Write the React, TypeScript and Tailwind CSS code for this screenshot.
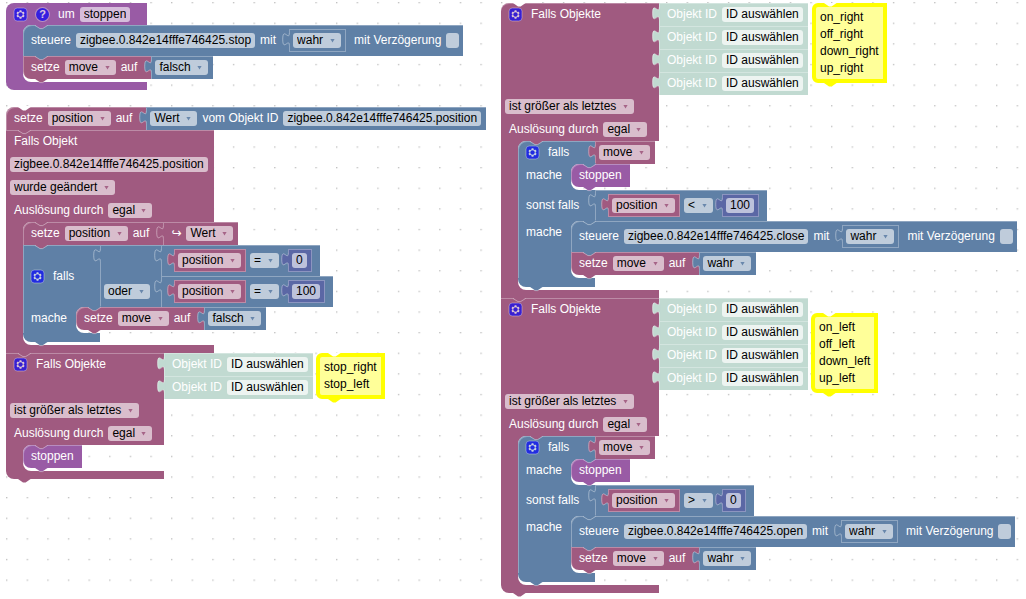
import type { ReactNode } from "react";
import clsx from "clsx";

const palette = {
  variable: { bg: "bg-[#a05a80]", fill: "fill-[#a05a80]" },
  logic: { bg: "bg-[#5f80a6]", fill: "fill-[#5f80a6]" },
  procedure: { bg: "bg-[#995ba5]", fill: "fill-[#995ba5]" },
  math: { bg: "bg-[#5b67a5]", fill: "fill-[#5b67a5]" },
  shadow: { bg: "bg-[#c1dad1]", fill: "fill-[#c1dad1]" },
  canvas: { bg: "bg-white", fill: "fill-white" },
};

type Color = keyof typeof palette;

const field = "h-[15px] rounded-[3px] bg-white/60 px-1 text-black leading-[15px] whitespace-nowrap outline-none";

function Notch({ color, at, line = true }: { color: Color; at: "top" | "bottom"; line?: boolean }) {
  return (
    <svg
      className={clsx("absolute left-3 z-10 overflow-visible pointer-events-none", at === "top" ? "top-0" : "top-full")}
      width="13"
      height="4"
      viewBox="0 0 13 4"
    >
      <path className={palette[color].fill} d="M0 -1V0L5 3.4H7.6L12.6 0V-1z" />
      {line && <path d="M0 0.5L5 3.6H7.6L12.6 0.5" fill="none" stroke="#fff" strokeOpacity="0.4" />}
    </svg>
  );
}

function Plug({ color }: { color: Color }) {
  return (
    <svg className="absolute right-full top-0 z-10 overflow-visible pointer-events-none" width="7" height="18" viewBox="0 0 7 18">
      <g transform="translate(0.4 0) scale(0.825)">
        <path className={palette[color].fill} d="M9.5 5H8c0 10 -8 -8 -8 7.5s8 -2.5 8 7.5h1.5z" />
        <path d="M8.4 5c0 10 -8 -8 -8 7.5s8 -2.5 8 7.5" fill="none" stroke="#fff" strokeOpacity="0.4" strokeWidth="1.2" />
      </g>
    </svg>
  );
}

function Gear() {
  return (
    <button type="button" aria-label="Einstellungen" className="mr-1 size-[13px] shrink-0 opacity-65">
      <svg viewBox="0 0 16 16" className="size-full overflow-visible">
        <rect width="16" height="16" rx="4" fill="#00f" stroke="#fff" strokeOpacity="0.6" />
        <path
          fill="#fff"
          d="m4.203,7.296 0,1.368 -0.92,0.677 -0.11,0.41 0.9,1.559 0.41,0.11 1.043,-0.457 1.187,0.683 0.127,1.134 0.3,0.3 1.8,0 0.3,-0.299 0.127,-1.138 1.185,-0.682 1.046,0.458 0.409,-0.11 0.9,-1.559 -0.11,-0.41 -0.92,-0.677 0,-1.366 0.92,-0.677 0.11,-0.41 -0.9,-1.559 -0.409,-0.109 -1.046,0.458 -1.185,-0.682 -0.127,-1.138 -0.3,-0.299 -1.8,0 -0.3,0.3 -0.126,1.135 -1.187,0.682 -1.043,-0.457 -0.41,0.11 -0.899,1.559 0.108,0.409z"
        />
        <circle cx="8" cy="8" r="2.7" fill="#00f" />
      </svg>
    </button>
  );
}

function Help() {
  return (
    <button
      type="button"
      aria-label="Hilfe"
      className="mr-1 flex size-[13px] shrink-0 items-center justify-center rounded-full bg-[#00f] text-[11px] font-bold leading-none text-white opacity-65 ring-1 ring-white/50"
    >
      ?
    </button>
  );
}

function Dropdown({ value, label, color = "variable" }: { value: string; label: string; color?: Color }) {
  return (
    <span className="relative flex">
      <select aria-label={label} className={clsx(field, "appearance-none pr-[17px]")}>
        <option>{value}</option>
      </select>
      <svg className="absolute right-[6px] top-[5px] pointer-events-none" width="5" height="5" viewBox="0 0 5 5">
        <path className={palette[color].fill} fillOpacity="0.9" d="M0.4 1H4.6L2.5 4.4z" />
      </svg>
    </span>
  );
}

function TextInput({ value, label }: { value: string; label: string }) {
  return <input type="text" aria-label={label} defaultValue={value} className={clsx(field, "field-sizing-content")} />;
}

function IdField({ children, light }: { children: string; light?: boolean }) {
  return <button type="button" className={clsx(field, light && "bg-white/70")}>{children}</button>;
}

// value blocks plug into their parent from the right
function Value({ color, children, inline }: { color: Color; children: ReactNode; inline?: boolean }) {
  return (
    <div
      className={clsx(
        "relative flex h-[23px] items-center gap-[5px] pl-1 pr-[5px]",
        palette[color].bg,
        inline ? "shadow-[inset_0_0_0_1px_rgba(255,255,255,0.3)]" : "shadow-[inset_1px_1px_0_rgba(255,255,255,0.3)]",
      )}
    >
      <Plug color={color} />
      {children}
    </div>
  );
}

function Bool({ value, inline }: { value: string; inline?: boolean }) {
  return (
    <Value color="logic" inline={inline}>
      <Dropdown value={value} label="Wahrheitswert" color="logic" />
    </Value>
  );
}

function Variable({ name, inline }: { name: string; inline?: boolean }) {
  return (
    <Value color="variable" inline={inline}>
      <Dropdown value={name} label="Variable" />
    </Value>
  );
}

function Compare({ op, value }: { op: string; value: string }) {
  return (
    <div className="relative flex h-[31px] items-center bg-[#5f80a6] pl-[13px] pr-2 shadow-[inset_1px_1px_0_rgba(255,255,255,0.3)]">
      <Plug color="logic" />
      <Variable name="position" inline />
      <div className="flex pl-1 pr-[9px]">
        <Dropdown value={op} label="Vergleich" color="logic" />
      </div>
      <Value color="math" inline>
        <TextInput value={value} label="Zahl" />
      </Value>
    </div>
  );
}

// one coloured block of a stack, with an optional value plugged in at its right
function Statement({ color, first, last, className, value, children }: {
  color: Color;
  first?: boolean;
  last?: boolean;
  className?: string;
  value?: ReactNode;
  children: ReactNode;
}) {
  return (
    <div className="relative flex">
      <div
        className={clsx(
          "flex items-center gap-[5px] pl-2 shadow-[inset_1px_1px_0_rgba(255,255,255,0.3)]",
          palette[color].bg,
          first && "rounded-tl-lg",
          last && "rounded-bl-lg",
          className,
        )}
      >
        {children}
      </div>
      {value}
      <Notch color={color} at="bottom" />
    </div>
  );
}

function SetVariable({ name, value, first, last }: { name: string; value: ReactNode; first?: boolean; last?: boolean }) {
  return (
    <Statement color="variable" first={first} last={last} className="h-[23px] pr-[14px]" value={value}>
      <span>setze</span>
      <Dropdown value={name} label="Variable" />
      <span>auf</span>
    </Statement>
  );
}

function Control({ id }: { id: string }) {
  return (
    <Statement color="logic" first className="h-[31px] pr-1">
      <span>steuere</span>
      <IdField>{id}</IdField>
      <span className="pr-2">mit</span>
      <Bool value="wahr" inline />
      <label className="flex items-center gap-[5px] pl-[3px]">
        mit Verzögerung
        <input type="checkbox" className="h-[15px] w-[13px] appearance-none rounded-[3px] bg-white/60" />
      </label>
    </Statement>
  );
}

function Call({ name }: { name: string }) {
  return (
    <Statement color="procedure" first last className="h-[23px] pr-2">
      <span>{name}</span>
    </Statement>
  );
}

// the mouth of a block: its left bar and the stack that it holds
function Mouth({ color, bar, children }: { color: Color; bar: ReactNode; children: ReactNode }) {
  return (
    <div className="flex">
      {bar}
      <div className="relative flex flex-col items-start pb-[3px]">
        <svg className={clsx("absolute left-0 top-0", palette[color].fill)} width="8" height="8">
          <path d="M0 0H8A8 8 0 0 0 0 8z" />
        </svg>
        <svg className={clsx("absolute bottom-0 left-0", palette[color].fill)} width="8" height="8">
          <path d="M0 0V8H8A8 8 0 0 1 0 0z" />
        </svg>
        <Notch color={color} at="top" />
        {children}
      </div>
    </div>
  );
}

function Bar({ color }: { color: Color }) {
  return <div className={clsx("w-[17px]", palette[color].bg)} />;
}

function LogicBar({ label }: { label: string }) {
  return (
    <div className="w-[53px] bg-[#5f80a6] pl-2 leading-[23px] shadow-[inset_1px_0_0_rgba(255,255,255,0.3)]">{label}</div>
  );
}

function LogicFoot() {
  return (
    <>
      <div className="h-[9px] w-[77px] rounded-bl-lg bg-[#5f80a6]" />
      <Notch color="logic" at="bottom" />
    </>
  );
}

function IfHead({ first }: { first?: boolean }) {
  return (
    <div
      className={clsx(
        "flex w-[77px] items-center gap-[5px] bg-[#5f80a6] pl-2 shadow-[inset_1px_1px_0_rgba(255,255,255,0.3)]",
        first && "rounded-tl-lg",
      )}
    >
      <Gear />
      <span>falls</span>
    </div>
  );
}

function Row({ children, flush }: { children: ReactNode; flush?: boolean }) {
  return <div className={clsx("flex h-[23px] items-center gap-[5px]", flush ? "pl-1" : "pl-2")}>{children}</div>;
}

function Trigger() {
  return (
    <Row>
      <span>Auslösung durch</span>
      <Dropdown value="egal" label="Auslösung durch" />
    </Row>
  );
}

function ObjectsTrigger({ inputs, first, last, children }: {
  inputs: number;
  first?: boolean;
  last?: boolean;
  children: ReactNode;
}) {
  return (
    <div className="relative flex flex-col items-start">
      {first && <Notch color="canvas" at="top" line={false} />}
      <div className="flex items-start">
        <div
          className={clsx(
            "w-[158px] self-stretch bg-[#a05a80] shadow-[inset_0_1px_0_rgba(255,255,255,0.3)]",
            first && "rounded-tl-lg",
          )}
        >
          <Row>
            <Gear />
            <span>Falls Objekte</span>
          </Row>
        </div>
        <div>
          {Array.from({ length: inputs }, (_, i) => (
            <Value key={i} color="shadow">
              <span className="pl-1">Objekt ID</span>
              <IdField light>ID auswählen</IdField>
            </Value>
          ))}
        </div>
      </div>
      <div className="w-[158px] bg-[#a05a80]">
        <Row flush>
          <Dropdown value="ist größer als letztes" label="Bedingung" />
        </Row>
        <Trigger />
      </div>
      <Mouth color="variable" bar={<Bar color="variable" />}>
        {children}
      </Mouth>
      <div className={clsx("h-2 w-[158px] bg-[#a05a80]", last && "rounded-bl-lg")} />
      <Notch color="variable" at="bottom" line={!last} />
    </div>
  );
}

function MoveBlock({ op, limit, id }: { op: string; limit: string; id: string }) {
  return (
    <div className="relative flex flex-col items-start">
      <div className="flex">
        <IfHead first />
        <Variable name="move" />
      </div>
      <Mouth color="logic" bar={<LogicBar label="mache" />}>
        <Call name="stoppen" />
      </Mouth>
      <div className="flex">
        <div className="flex w-[77px] items-center bg-[#5f80a6] pl-2 shadow-[inset_1px_0_0_rgba(255,255,255,0.3)]">sonst falls</div>
        <Compare op={op} value={limit} />
      </div>
      <Mouth color="logic" bar={<LogicBar label="mache" />}>
        <Control id={id} />
        <SetVariable name="move" last value={<Bool value="wahr" />} />
      </Mouth>
      <LogicFoot />
    </div>
  );
}

function StopProcedure() {
  return (
    <div className="flex flex-col items-start">
      <div className="flex h-[22px] w-[141px] items-center gap-[5px] rounded-tl-lg bg-[#995ba5] pl-2">
        <Gear />
        <Help />
        <span>um</span>
        <TextInput value="stoppen" label="Name der Funktion" />
      </div>
      <Mouth color="procedure" bar={<Bar color="procedure" />}>
        <Control id="zigbee.0.842e14fffe746425.stop" />
        <SetVariable name="move" last value={<Bool value="falsch" />} />
      </Mouth>
      <div className="h-2 w-[141px] rounded-bl-lg bg-[#995ba5]" />
    </div>
  );
}

function PositionTrigger() {
  return (
    <div className="relative flex flex-col items-start">
      <div className="w-[208px] bg-[#a05a80] shadow-[inset_0_1px_0_rgba(255,255,255,0.3)]">
        <Row>Falls Objekt</Row>
        <Row flush>
          <IdField>zigbee.0.842e14fffe746425.position</IdField>
        </Row>
        <Row flush>
          <Dropdown value="wurde geändert" label="Bedingung" />
        </Row>
        <Trigger />
      </div>
      <Mouth color="variable" bar={<Bar color="variable" />}>
        <SetVariable
          name="position"
          first
          value={
            <Value color="variable">
              <span className="pl-1 font-['DejaVu_Sans',sans-serif]">↪</span>
              <Dropdown value="Wert" label="Eigenschaft" />
            </Value>
          }
        />
        <div className="relative flex flex-col items-start">
          <div className="flex">
            <IfHead />
            <div className="relative flex w-[61px] flex-col justify-end bg-[#5f80a6] shadow-[inset_1px_1px_0_rgba(255,255,255,0.3)]">
              <Plug color="logic" />
              <div className="flex h-[31px] items-center pl-1">
                <Dropdown value="oder" label="Verknüpfung" color="logic" />
              </div>
            </div>
            <div className="flex flex-col items-start">
              <Compare op="=" value="0" />
              <Compare op="=" value="100" />
            </div>
          </div>
          <Mouth color="logic" bar={<LogicBar label="mache" />}>
            <SetVariable name="move" first last value={<Bool value="falsch" />} />
          </Mouth>
          <LogicFoot />
        </div>
      </Mouth>
      <div className="h-2 w-[208px] bg-[#a05a80]" />
      <Notch color="variable" at="bottom" />
    </div>
  );
}

function Comment({ lines }: { lines: string[] }) {
  return (
    <div className="relative flex rounded-l-md border-4 border-[#ffff00] bg-[#ffff99]">
      <textarea
        aria-label="Kommentar"
        defaultValue={lines.join("\n")}
        rows={lines.length}
        className="field-sizing-content resize-none overflow-hidden px-1 py-[2px] leading-[17px] text-black outline-none"
      />
      <svg className="absolute -top-1 left-2 overflow-visible" width="13" height="4">
        <path className="fill-white" d="M0 0L5 3.4H7.6L12.6 0z" />
      </svg>
      <svg className="absolute -bottom-2 left-2" width="13" height="4">
        <path className="fill-[#ffff00]" d="M0 0L5 3.4H7.6L12.6 0z" />
      </svg>
    </div>
  );
}

function Grid() {
  return (
    <svg className="absolute inset-0 size-full" aria-hidden="true">
      <defs>
        <pattern id="dots" width="25" height="25" patternUnits="userSpaceOnUse" patternTransform="translate(6 2) scale(0.825)">
          <path d="M0.2 0.9H1.6" stroke="#999" strokeWidth="1.3" />
        </pattern>
      </defs>
      <rect width="100%" height="100%" fill="url(#dots)" />
    </svg>
  );
}

export default function App() {
  return (
    <main className="relative min-h-screen overflow-hidden bg-white font-['Liberation_Sans',Arial,sans-serif] text-[12px] leading-[15px] text-white whitespace-nowrap">
      <Grid />
      <div className="absolute left-[6px] top-[3px]">
        <StopProcedure />
      </div>
      <div className="absolute left-[6px] top-[107px]">
        <Notch color="canvas" at="top" line={false} />
        <SetVariable
          name="position"
          first
          value={
            <Value color="logic">
              <Dropdown value="Wert" label="Eigenschaft" color="logic" />
              <span>vom Objekt ID</span>
              <IdField>zigbee.0.842e14fffe746425.position</IdField>
            </Value>
          }
        />
        <PositionTrigger />
        <ObjectsTrigger inputs={2} last>
          <Call name="stoppen" />
        </ObjectsTrigger>
      </div>
      <div className="absolute left-[316px] top-[353px]">
        <Comment lines={["stop_right", "stop_left"]} />
      </div>
      <div className="absolute left-[501px] top-[3px]">
        <ObjectsTrigger inputs={4} first>
          <MoveBlock op="<" limit="100" id="zigbee.0.842e14fffe746425.close" />
        </ObjectsTrigger>
        <ObjectsTrigger inputs={4} last>
          <MoveBlock op=">" limit="0" id="zigbee.0.842e14fffe746425.open" />
        </ObjectsTrigger>
      </div>
      <div className="absolute left-[812px] top-[3px]">
        <Comment lines={["on_right", "off_right", "down_right", "up_right"]} />
      </div>
      <div className="absolute left-[811px] top-[313px]">
        <Comment lines={["on_left", "off_left", "down_left", "up_left"]} />
      </div>
    </main>
  );
}
